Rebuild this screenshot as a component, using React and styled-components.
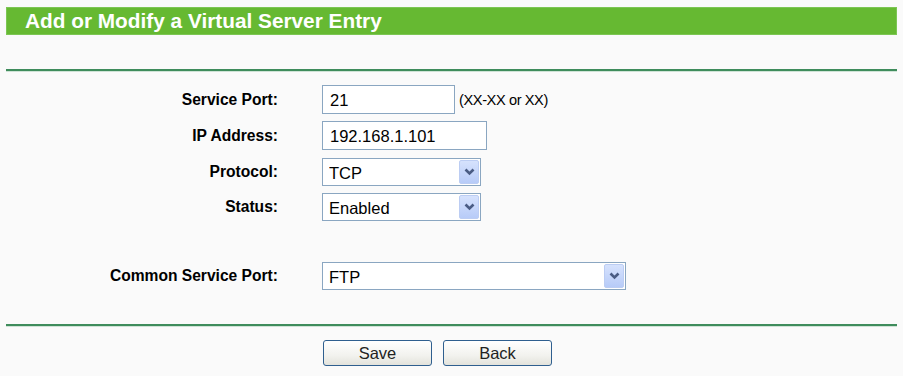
import React, { useState } from 'react'
import styled, { createGlobalStyle } from 'styled-components'

const GlobalStyle = createGlobalStyle`
    html, body {
        margin: 0;
        padding: 0;
        background: #fafafa;
        font-family: 'Liberation Sans', Arial, sans-serif;
    }
`

const Page = styled.div`
    width: 891px;
    padding: 7px 0 0 6px;
`

const TitleBar = styled.div`
    height: 28px;
    background: #66b932;
    border: 1px solid #7cc653;
    box-sizing: border-box;
    color: #fff;
    font-size: 20.8px;
    font-weight: bold;
    line-height: 26px;
    padding-left: 18px;
    white-space: nowrap;
`

const Rule = styled.div`
    height: 2px;
    background: #3f8c5c;
    border-bottom: 1px solid #cfe3d6;
    margin-top: ${(p) => p.top}px;
`

const Form = styled.div`
    display: grid;
    grid-template-columns: 272px 1fr;
    column-gap: 44px;
    row-gap: 7px;
    align-items: center;
    padding-top: 13px;
`

const Label = styled.label`
    text-align: right;
    font-size: 15.6px;
    font-weight: bold;
    color: #000;
    white-space: nowrap;
    margin-top: ${(p) => p.top || 0}px;
`

const Field = styled.div`
    display: flex;
    align-items: center;
    gap: 4px;
    margin-top: ${(p) => p.top || 0}px;
`

const Input = styled.input`
    box-sizing: border-box;
    width: ${(p) => p.w}px;
    height: 29px;
    border: 1px solid #8aa6c1;
    background: #fff;
    padding: 2px 7px 0;
    font-family: 'Liberation Sans', Arial, sans-serif;
    font-size: 16.5px;
    color: #000;
    outline: none;
`

const Hint = styled.span`
    font-size: 14.6px;
    letter-spacing: -0.4px;
    color: #000;
`

const SelectWrap = styled.div`
    position: relative;
    width: ${(p) => p.w}px;
    height: 28px;
`

const Select = styled.select`
    appearance: none;
    box-sizing: border-box;
    width: 100%;
    height: 100%;
    border: 1px solid #8aa6c1;
    border-radius: 0;
    background: #fff;
    padding: 2px 0 0 6px;
    font-family: 'Liberation Sans', Arial, sans-serif;
    font-size: 16.5px;
    color: #000;
    outline: none;
`

const Arrow = styled.span`
    position: absolute;
    top: 2px;
    right: 2px;
    bottom: 2px;
    width: 20px;
    box-sizing: border-box;
    border: 1px solid #bccdf3;
    border-radius: 2px;
    background: linear-gradient(#d6e2fd, #b7cbf8);
    display: flex;
    align-items: center;
    justify-content: center;
    pointer-events: none;
`

const Buttons = styled.div`
    display: flex;
    gap: 11px;
    padding: 13px 0 0 317px;
`

const Button = styled.button`
    box-sizing: border-box;
    width: 109px;
    height: 26px;
    border: 1px solid #2f5f8f;
    border-radius: 3px;
    background: linear-gradient(#ffffff, #f2f2ee 60%, #e3e3dc);
    font-family: 'Liberation Sans', Arial, sans-serif;
    font-size: 16.5px;
    color: #222;
    padding: 0;
`

const Chevron = () => (
    <svg width="11" height="8" viewBox="0 0 11 8">
        <path d="M1.5 1.5 L5.5 5.5 L9.5 1.5" fill="none" stroke="#4a5c84" strokeWidth="2.6" />
    </svg>
)

const DropDown = ({ w, value, options, onChange }) => (
    <SelectWrap w={w}>
        <Select value={value} onChange={(e) => onChange(e.target.value)}>
            {options.map((o) => (
                <option key={o}>{o}</option>
            ))}
        </Select>
        <Arrow>
            <Chevron />
        </Arrow>
    </SelectWrap>
)

const App = () => {
    const [port, setPort] = useState('21')
    const [ip, setIp] = useState('192.168.1.101')
    const [protocol, setProtocol] = useState('TCP')
    const [status, setStatus] = useState('Enabled')
    const [common, setCommon] = useState('FTP')

    return (
        <Page>
            <GlobalStyle />
            <TitleBar>Add or Modify a Virtual Server Entry</TitleBar>
            <Rule top={34} />
            <Form>
                <Label>Service Port:</Label>
                <Field>
                    <Input w={133} value={port} onChange={(e) => setPort(e.target.value)} />
                    <Hint>(XX-XX or XX)</Hint>
                </Field>

                <Label>IP Address:</Label>
                <Field>
                    <Input w={165} value={ip} onChange={(e) => setIp(e.target.value)} />
                </Field>

                <Label top={1}>Protocol:</Label>
                <Field top={1}>
                    <DropDown w={159} value={protocol} options={['TCP', 'UDP', 'ALL']} onChange={setProtocol} />
                </Field>

                <Label>Status:</Label>
                <Field>
                    <DropDown w={159} value={status} options={['Enabled', 'Disabled']} onChange={setStatus} />
                </Field>

                <Label top={34}>Common Service Port:</Label>
                <Field top={34}>
                    <DropDown
                        w={304}
                        value={common}
                        options={['--Select One--', 'DNS', 'FTP', 'GOPHER', 'HTTP', 'NNTP', 'POP3', 'PPTP', 'SMTP', 'SOCK', 'TELNET']}
                        onChange={setCommon}
                    />
                </Field>
            </Form>
            <Rule top={34} />
            <Buttons>
                <Button>Save</Button>
                <Button>Back</Button>
            </Buttons>
        </Page>
    )
}

export default App
